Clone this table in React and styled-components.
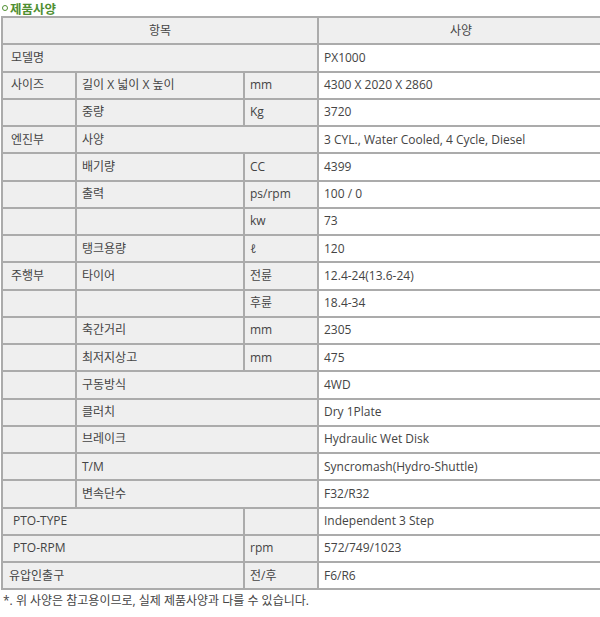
import styled, { createGlobalStyle } from "styled-components";

const GlobalStyle = createGlobalStyle`
  html, body {
    margin: 0;
    padding: 0;
    background: #fff;
    overflow: hidden;
  }
  body {
    font-family: "Open Sans", "Noto Sans CJK KR", sans-serif;
    color: #444;
  }
`;

const Page = styled.div`
  width: 600px;
  overflow: hidden;
`;

const Title = styled.h3`
  display: flex;
  align-items: center;
  gap: 2px;
  height: 16px;
  margin: 0;
  padding-left: 2px;
  font-family: "Noto Sans CJK KR", sans-serif;
  font-size: 12.5px;
  font-weight: 700;
  line-height: 15px;
  color: #4f8f32;
`;

const Ring = styled.span`
  width: 4px;
  height: 4px;
  border: 1.5px solid #4f8f32;
  border-radius: 50%;
`;

const Table = styled.table`
  width: 604px;
  margin-left: 1px;
  border-collapse: collapse;
  table-layout: fixed;
  font-size: 12px;
  color: #444;
`;

const Cell = styled.td`
  height: 25.25px;
  padding: 0 0 0 ${({ $pad }) => $pad ?? 5}px;
  border: 2px solid #ababab;
  background: ${({ $white }) => ($white ? "#fff" : "#efefef")};
  text-align: ${({ $center }) => ($center ? "center" : "left")};
  white-space: nowrap;
  line-height: 14px;
  vertical-align: middle;
`;

const Note = styled.p`
  margin: 3px 0 0 3px;
  font-size: 12px;
  line-height: 16px;
  color: #444;
`;

const rows = [
  [["모델명", 3, 8], ["PX1000"]],
  [["사이즈", 1, 8], ["길이 X 넓이 X 높이"], ["mm"], ["4300 X 2020 X 2860"]],
  [[""], ["중량"], ["Kg"], ["3720"]],
  [["엔진부", 1, 8], ["사양", 2], ["3 CYL., Water Cooled, 4 Cycle, Diesel"]],
  [[""], ["배기량"], ["CC"], ["4399"]],
  [[""], ["출력"], ["ps/rpm"], ["100 / 0"]],
  [[""], [""], ["kw"], ["73"]],
  [[""], ["탱크용량"], ["ℓ"], ["120"]],
  [["주행부", 1, 8], ["타이어"], ["전륜"], ["12.4-24(13.6-24)"]],
  [[""], [""], ["후륜"], ["18.4-34"]],
  [[""], ["축간거리"], ["mm"], ["2305"]],
  [[""], ["최저지상고"], ["mm"], ["475"]],
  [[""], ["구동방식", 2], ["4WD"]],
  [[""], ["클러치", 2], ["Dry 1Plate"]],
  [[""], ["브레이크", 2], ["Hydraulic Wet Disk"]],
  [[""], ["T/M", 2], ["Syncromash(Hydro-Shuttle)"]],
  [[""], ["변속단수", 2], ["F32/R32"]],
  [["PTO-TYPE", 2, 10], [""], ["Independent 3 Step"]],
  [["PTO-RPM", 2, 10], ["rpm"], ["572/749/1023"]],
  [["유압인출구", 2, 6], ["전/후"], ["F6/R6"]],
];

export default function App() {
  return (
    <Page>
      <GlobalStyle />
      <Title>
        <Ring />
        제품사양
      </Title>
      <Table>
        <colgroup>
          <col style={{ width: 74 }} />
          <col style={{ width: 168 }} />
          <col style={{ width: 74 }} />
          <col />
        </colgroup>
        <tbody>
          <tr>
            <Cell colSpan={3} $center $pad={0}>
              항목
            </Cell>
            <Cell $center $pad={0}>
              사양
            </Cell>
          </tr>
          {rows.map((row, i) => (
            <tr key={i}>
              {row.map(([text, span, pad], j) => (
                <Cell
                  key={j}
                  colSpan={span || 1}
                  $pad={pad}
                  $white={j === row.length - 1}
                >
                  {text}
                </Cell>
              ))}
            </tr>
          ))}
        </tbody>
      </Table>
      <Note>*. 위 사양은 참고용이므로, 실제 제품사양과 다를 수 있습니다.</Note>
    </Page>
  );
}
